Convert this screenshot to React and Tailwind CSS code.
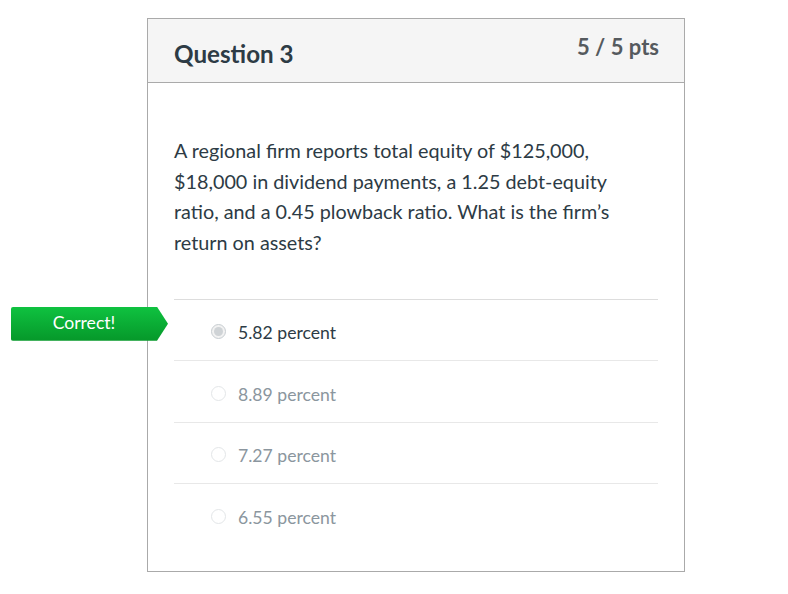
const answers = [
  { label: "5.82 percent", selected: true },
  { label: "8.89 percent", selected: false },
  { label: "7.27 percent", selected: false },
  { label: "6.55 percent", selected: false },
]

const Radio = ({ selected }) => (
  <span
    className={
      selected
        ? "flex h-[15px] w-[15px] items-center justify-center rounded-full border border-[#c7cdd1] bg-[#f2f2f2]"
        : "block h-[15px] w-[15px] rounded-full border border-[#e3e6e8] bg-white"
    }
  >
    {selected && <span className="h-[9px] w-[9px] rounded-full bg-[#cfd3d6]"></span>}
  </span>
)

const App = () => {
  return (
    <div className="min-h-[594px] bg-white pl-[147px] pt-[18px] font-['Lato','Open_Sans',sans-serif] text-[#2d3b45]">
      <div className="w-[538px] h-[554px] border border-[#aaaaaa] bg-white">
        {/* Header */}
        <div className="flex h-[64px] justify-between border-b border-[#aaaaaa] bg-[#f5f5f5] pl-[26px] pr-[25px]">
          <h2 className="pt-[19px] text-[24.2px] font-bold leading-[32px] text-[#2d3b45]">Question 3</h2>
          <span className="pt-[14px] text-[22px] font-bold leading-[28px] text-[#555a5e]">5 / 5 pts</span>
        </div>

        {/* Body */}
        <div className="px-[26px] pt-[52px]">
          <p className="max-w-[462px] text-[19.8px] leading-[30.7px]">
            A regional firm reports total equity of $125,000, $18,000 in dividend payments, a 1.25 debt-equity
            ratio, and a 0.45 plowback ratio. What is the firm’s return on assets?
          </p>

          <div className="mt-[41px] border-t border-[#dddddd]">
            {answers.map((a, i) => (
              <div
                key={a.label}
                className={`relative flex h-[61.5px] items-center gap-[12px] pl-[37px] ${
                  i < answers.length - 1 ? "border-b border-[#e8e8e8]" : ""
                }`}
              >
                {a.selected && (
                  <div className="absolute left-[-163px] top-[7px] h-[34px] w-[157px] bg-linear-to-b from-[#0fc240] to-[#06982a] rounded-l-[2px] [clip-path:polygon(0_0,146px_0,100%_50%,146px_100%,0_100%)]">
                    <span className="block w-[146px] pt-[5px] text-center text-[17.6px] leading-[22px] text-white">
                      Correct!
                    </span>
                  </div>
                )}
                <span className="flex pt-[3px]">
                  <Radio selected={a.selected} />
                </span>
                <span className={`pt-[7px] text-[17.6px] ${a.selected ? "text-[#2d3b45]" : "text-[#8b969e]"}`}>
                  {a.label}
                </span>
              </div>
            ))}
          </div>
        </div>
      </div>
    </div>
  )
}

export default App
